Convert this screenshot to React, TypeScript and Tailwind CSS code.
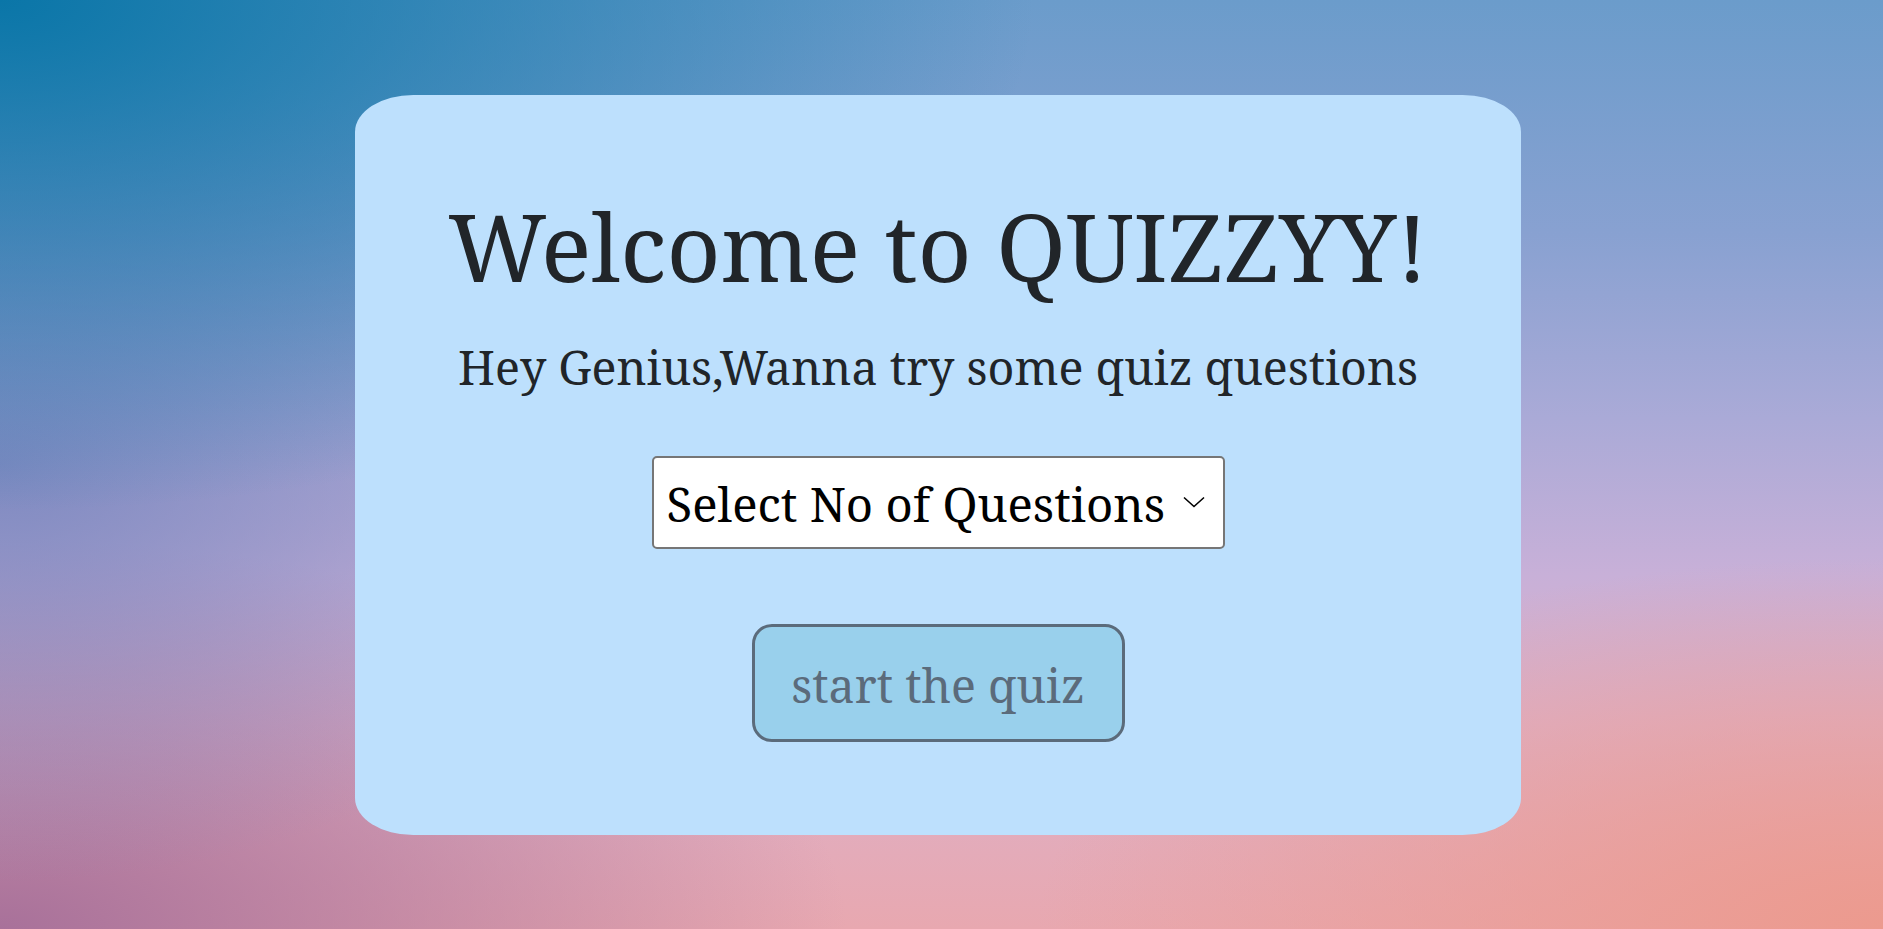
export default function App() {
  return (
    <div className="relative min-h-screen w-full flex items-center justify-center pr-[7px] font-['Noto_Serif',serif] bg-[radial-gradient(ellipse_55%_55%_at_0%_0%,#0a76a8_0%,rgba(10,118,168,0)_100%),radial-gradient(ellipse_35%_45%_at_0%_50%,rgba(120,134,190,0.9)_0%,rgba(120,134,190,0)_100%),radial-gradient(ellipse_45%_42%_at_0%_100%,#a8719a_0%,rgba(168,113,154,0)_100%),radial-gradient(ellipse_45%_40%_at_100%_100%,#ec9a8e_0%,rgba(236,154,142,0)_100%),linear-gradient(to_bottom,#6b9ccb_0%,#88a1d1_25%,#aaaad7_45%,#c8b0d8_62%,#ddb0c8_78%,#e8a8b0_100%)]">
      <div className="w-[1166px] h-[740px] bg-[#bde0fd] rounded-[5%] flex flex-col items-center pt-[87px]">
        <h1 className="text-[94px] leading-[128px] text-[#212529] font-normal whitespace-nowrap">
          Welcome to QUIZZYY!
        </h1>
        <p className="mt-[25px] text-[46.6px] leading-[64px] text-[#212529] whitespace-nowrap">
          Hey Genius,Wanna try some quiz questions
        </p>
        <div className="relative mt-[57px] w-[573px] h-[93px]">
          <select
            defaultValue=""
            className="appearance-none w-full h-full bg-white border-2 border-[#767676] rounded-[5px] pl-[13px] pr-[40px] pt-[5px] text-[47.3px] text-black font-['Noto_Serif',serif] outline-none"
          >
            <option value="" disabled>
              Select No of Questions
            </option>
            <option value="5">5</option>
            <option value="10">10</option>
            <option value="15">15</option>
          </select>
          <svg
            className="pointer-events-none absolute right-[20px] top-1/2 -translate-y-1/2"
            width="22"
            height="12"
            viewBox="0 0 22 12"
            fill="none"
          >
            <path d="M1 1.5 L11 10.5 L21 1.5" stroke="#000" strokeWidth="1.6" />
          </svg>
        </div>
        <button className="mt-[75px] w-[373px] h-[118px] bg-[#99d0ec] border-[3px] border-[#5b6b7b] rounded-[20px] pt-[5px] text-[46.5px] text-[#5b6b7b] font-['Noto_Serif',serif] leading-none">
          start the quiz
        </button>
      </div>
    </div>
  );
}
